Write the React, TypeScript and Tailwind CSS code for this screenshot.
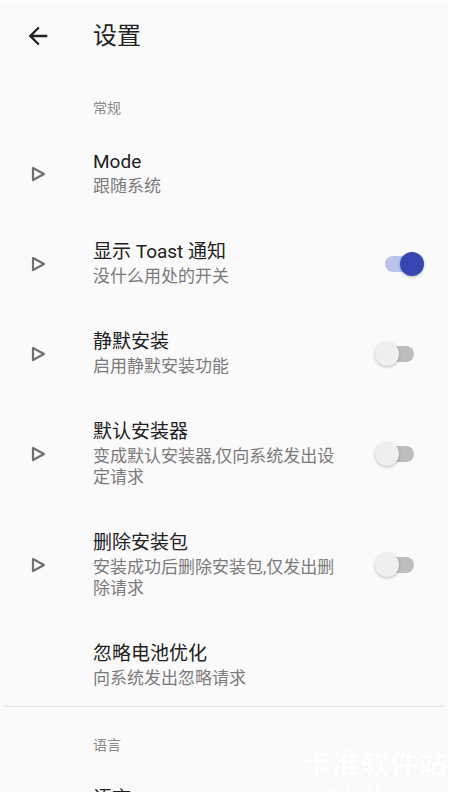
import React from "react";

const FONT = "font-['Roboto','Noto_Sans_CJK_SC',sans-serif]";

function Tri() {
  return (
    <svg width="15" height="16" viewBox="0 0 15 16" className="block">
      <polygon
        points="2,2 13,8 2,14"
        fill="none"
        stroke="#6f6f6f"
        strokeWidth="2.2"
        strokeLinejoin="round"
      />
    </svg>
  );
}

function Toggle({ on }: { on: boolean }) {
  return (
    <div className="relative w-[50px] h-[24px] ml-[27px]">
      <div
        className={
          "absolute left-[10px] top-[4px] w-[29px] h-[16px] rounded-full " +
          (on ? "bg-[#bcc3ea]" : "bg-[#bdbdbd]")
        }
      />
      <div
        className={
          "absolute top-0 w-[24px] h-[24px] rounded-full shadow-[0_1px_3px_rgba(0,0,0,0.25)] " +
          (on ? "left-[25px] bg-[#3646b2]" : "left-0 bg-[#efefef]")
        }
      />
    </div>
  );
}

function Row({
  title,
  sub,
  icon = true,
  toggle,
  last = false,
}: {
  title: string;
  sub: string;
  icon?: boolean;
  toggle?: boolean;
  last?: boolean;
}) {
  return (
    <div className={"flex items-center pt-[23px] " + (last ? "pb-[17px]" : "pb-[20px]")}>
      <div className="w-[93px] pl-[31px] flex items-center">{icon && <Tri />}</div>
      <div className="w-[255px] flex flex-col">
        <div className="text-[19px] leading-[24px] text-[#212121]">{title}</div>
        <div className="mt-[2px] text-[17px] leading-[21px] text-[#7a7a7a]">{sub}</div>
      </div>
      {toggle !== undefined && <Toggle on={toggle} />}
    </div>
  );
}

function Category({ label }: { label: string }) {
  return (
    <div className="pl-[93px] pt-[29px] pb-[10px] text-[14px] leading-[18px] text-[#8a8a8a]">
      {label}
    </div>
  );
}

export default function App() {
  return (
    <div className={"min-h-screen bg-white " + FONT}>
      <div className="relative mt-[1px] w-[448px] h-[791px] bg-[#fafafa] overflow-hidden">
        <div className="flex items-center h-[69px]">
          <div className="w-[93px] pl-[24px] flex items-center">
            <svg width="28" height="28" viewBox="0 0 24 24" className="block">
              <path
                d="M20 11H7.83l5.59-5.59L12 4l-8 8 8 8 1.41-1.41L7.83 13H20v-2z"
                fill="#222"
              />
            </svg>
          </div>
          <div className="text-[24px] leading-[30px] text-[#222]">设置</div>
        </div>
        <Category label="常规" />
        <Row title="Mode" sub="跟随系统" />
        <Row title="显示 Toast 通知" sub="没什么用处的开关" toggle={true} />
        <Row title="静默安装" sub="启用静默安装功能" toggle={false} />
        <Row title="默认安装器" sub="变成默认安装器,仅向系统发出设定请求" toggle={false} />
        <Row title="删除安装包" sub="安装成功后删除安装包,仅发出删除请求" toggle={false} />
        <Row title="忽略电池优化" sub="向系统发出忽略请求" icon={false} last />
        <div className="h-px bg-[#e2e2e2] mx-[4px]" />
        <Category label="语言" />
        <Row title="语言" sub="跟随系统" />
        <div className="absolute right-0 top-[748px] flex flex-col items-end text-white [text-shadow:0_0_2px_rgba(0,0,0,0.035)]">
          <div className="text-[28px] leading-[32px] font-bold tracking-[1px]">卡准软件站</div>
          <div className="mt-[2px] text-[15px] leading-[16px] font-bold tracking-[2px]">www.kazhun.com</div>
        </div>
      </div>
    </div>
  );
}
